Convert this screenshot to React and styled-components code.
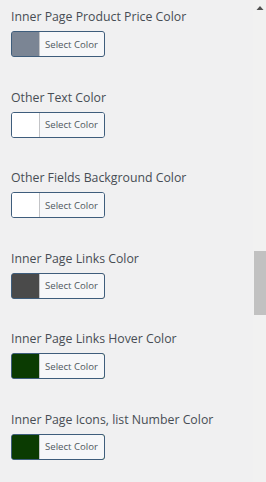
import React from "react";
import styled, { createGlobalStyle } from "styled-components";

const Global = createGlobalStyle`
  html, body { margin: 0; padding: 0; background: #f0f0f1; }
  body { width: 266px; height: 482px; overflow: hidden; font-family: "Open Sans", "Noto Sans", sans-serif; }
`;

const Page = styled.div`
  position: relative;
  width: 266px;
  height: 482px;
  overflow: hidden;
  background: #f0f0f1;
`;

const List = styled.div`
  display: flex;
  flex-direction: column;
  padding: 8px 0 0 11px;
`;

const Control = styled.div`
  display: flex;
  flex-direction: column;
  align-items: flex-start;
  gap: 5px;
  height: 80.5px;
`;

const Title = styled.span`
  font-size: 12.3px;
  line-height: 18px;
  font-weight: 500;
  color: #474d54;
  white-space: nowrap;
`;

const ColorButton = styled.button`
  display: flex;
  align-items: stretch;
  height: 26px;
  padding: 0;
  margin: 0;
  border: 1px solid #3e5d7c;
  border-radius: 3px;
  background: ${(p) => p.$color};
  overflow: hidden;
  cursor: pointer;
  box-sizing: border-box;
`;

const Swatch = styled.span`
  width: 27px;
  background: ${(p) => p.$color};
`;

const Label = styled.span`
  display: flex;
  align-items: center;
  padding: 0 6px 0 5px;
  background: #f6f7f9;
  border-left: 1px solid #c3c4c7;
  font-family: "Open Sans", "Noto Sans", sans-serif;
  font-size: 9.6px;
  color: #50575e;
  white-space: nowrap;
`;

const Track = styled.div`
  position: absolute;
  top: 0;
  right: 0;
  width: 13px;
  height: 482px;
  background: #f1f1f1;
`;

const Arrow = styled.svg`
  position: absolute;
  top: 5px;
  left: 3px;
`;

const Thumb = styled.div`
  position: absolute;
  top: 251px;
  left: 1px;
  width: 12px;
  height: 64px;
  background: #c1c1c1;
`;

const items = [
  ["Inner Page Product Price Color", "#7b8594"],
  ["Other Text Color", "#ffffff"],
  ["Other Fields Background Color", "#ffffff"],
  ["Inner Page Links Color", "#4a4a4a"],
  ["Inner Page Links Hover Color", "#0b3b02"],
  ["Inner Page Icons, list Number Color", "#0b3b02"],
];

export default function App() {
  return (
    <Page>
      <Global />
      <List>
        {items.map(([t, c]) => (
          <Control key={t}>
            <Title>{t}</Title>
            <ColorButton type="button" $color={c}>
              <Swatch $color={c} />
              <Label>Select Color</Label>
            </ColorButton>
          </Control>
        ))}
      </List>
      <Track>
        <Arrow width="8" height="6" viewBox="0 0 8 6">
          <polygon points="4,1 7.5,5 0.5,5" fill="#505050" />
        </Arrow>
        <Thumb />
      </Track>
    </Page>
  );
}
